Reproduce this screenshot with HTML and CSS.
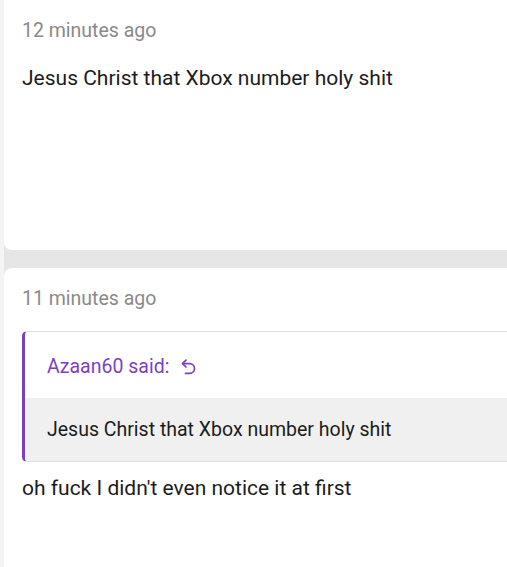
FILE: index.html
```html
<!DOCTYPE html>
<html>
<head>
<meta charset="utf-8">
<link rel="stylesheet" href="styles.css">
</head>
<body>
<div class="page">
  <div class="card card-first">
    <div class="time">12 minutes ago</div>
    <div class="content">Jesus Christ that Xbox number holy shit</div>
  </div>
  <div class="card card-second">
    <div class="time">11 minutes ago</div>
    <blockquote class="quote">
      <div class="quote-head">
        <span class="quote-author">Azaan60 said:</span>
        <svg class="quote-icon" width="15" height="16" viewBox="0 0 15 16" fill="none" stroke="currentColor" stroke-width="1.7" stroke-linecap="round" stroke-linejoin="round">
          <path d="M5 1.2 L1.5 4.6 L5 8"/>
          <path d="M2 4.6 H8.6 a4.9 4.9 0 0 1 0 9.8 H4.5"/>
        </svg>
      </div>
      <div class="quote-body">Jesus Christ that Xbox number holy shit</div>
    </blockquote>
    <div class="content reply">oh fuck I didn't even notice it at first</div>
  </div>
</div>
</body>
</html>
```

FILE: styles.css
```css
html, body {
  margin: 0;
  padding: 0;
  overflow: hidden;
  background: #f4f4f4;
}

body {
  font-family: Roboto, "Noto Sans", sans-serif;
  font-size: 19.5px;
  line-height: 28px;
  color: #1c1c1c;
}

.page {
  margin-left: 4px;
  background: #e6e6e6;
  display: flex;
  flex-direction: column;
  gap: 18px;
}

.card {
  background: #ffffff;
  border-radius: 8px 0 0 8px;
  padding: 17px 0 0 18px;
  box-sizing: border-box;
}

.card-first {
  border-radius: 0 0 0 8px;
  height: 250px;
}

.card-second {
  height: 320px;
}

.time {
  color: #8a8a8a;
}

.content {
  font-size: 21px;
  line-height: 30px;
  margin-top: 18px;
}

.quote {
  margin: 18px 0 0 0;
  border-top: 1px solid #dedede;
  border-bottom: 1px solid #dedede;
  border-left: 3px solid #7b3fc5;
  border-radius: 5px 0 0 5px;
  overflow: hidden;
}

.quote-head {
  display: flex;
  align-items: center;
  gap: 12px;
  padding: 21px 0 17px 22px;
  color: #7b3fc5;
}

.quote-icon {
  display: block;
  margin-top: -1px;
}

.quote-body {
  background: #f0f0f0;
  padding: 18px 0 17px 22px;
}

.content.reply {
  margin-top: 11px;
}
```
